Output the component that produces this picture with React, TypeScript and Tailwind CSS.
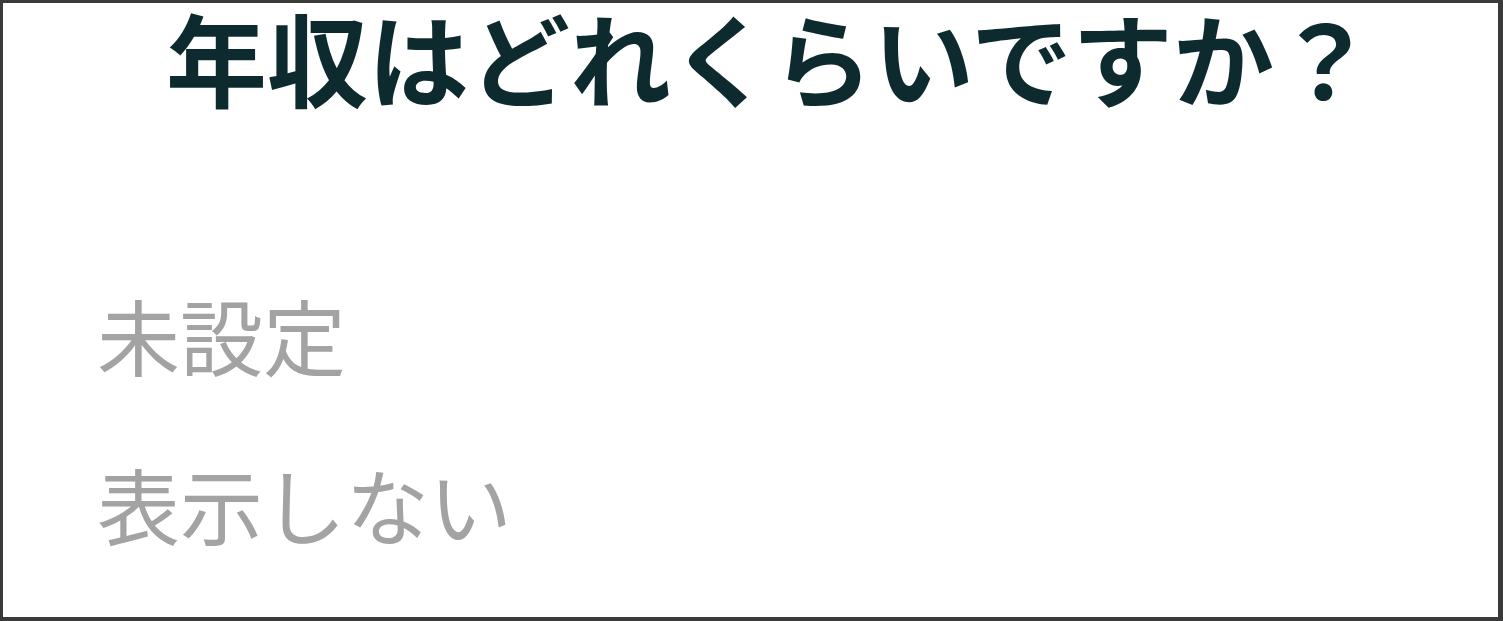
export default function App() {
  const options = ["未設定", "表示しない"];

  return (
    <div
      className="h-[621px] w-[1503px] overflow-hidden border-[3px] border-r-[5px] border-b-[4px] border-[#3a3a3a] bg-white"
      style={{ fontFamily: '"Noto Sans CJK JP", "Noto Sans", sans-serif' }}
    >
      <h1 className="pl-[40px] text-center text-[101px] font-semibold leading-[106px] text-[#0d2a2e]">
        年収はどれくらいですか？
      </h1>
      <ul className="mt-[180px] flex flex-col gap-[79px] pl-[94px]">
        {options.map((o) => (
          <li key={o} className="text-[83px] leading-[90px] text-[#a3a3a3]">
            {o}
          </li>
        ))}
      </ul>
    </div>
  );
}
